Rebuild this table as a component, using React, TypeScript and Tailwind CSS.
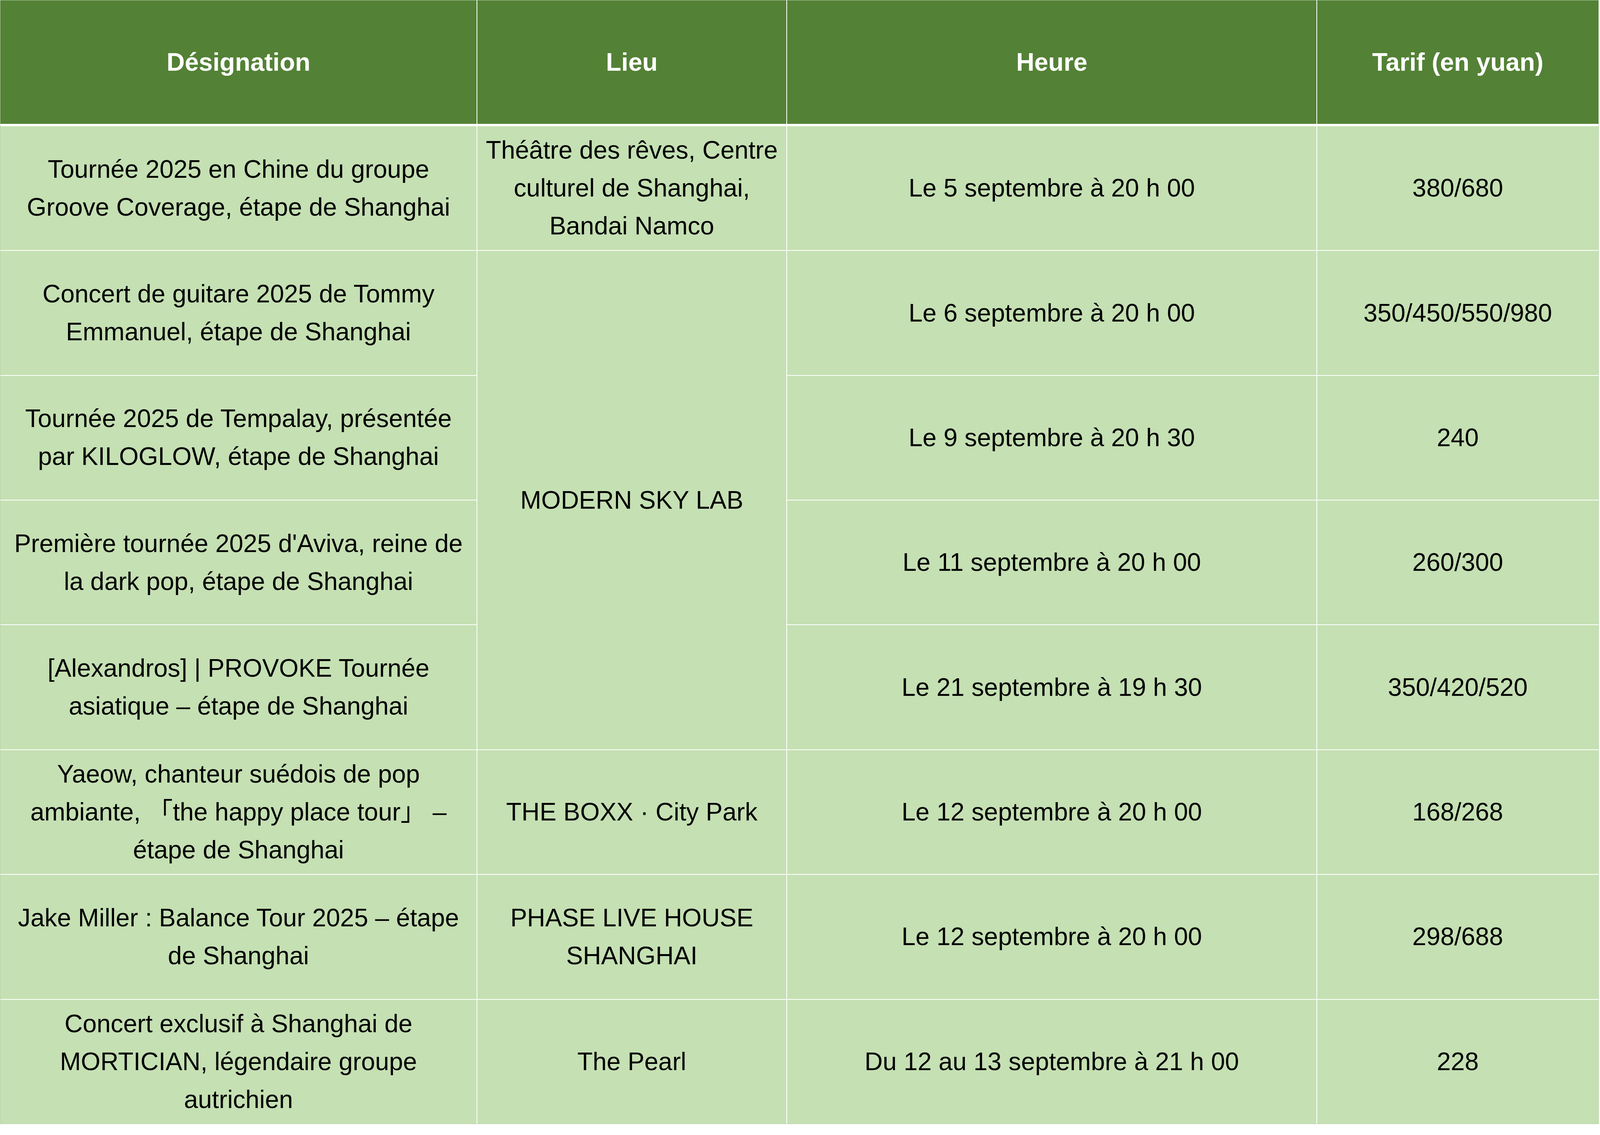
import React from "react";

type Row = {
  name: string[];
  lieu?: string[];
  heure: string;
  tarif: string;
};

const rows: Row[] = [
  {
    name: ["Tournée 2025 en Chine du groupe", "Groove Coverage, étape de Shanghai"],
    lieu: ["Théâtre des rêves, Centre", "culturel de Shanghai,", "Bandai Namco"],
    heure: "Le 5 septembre à 20 h 00",
    tarif: "380/680",
  },
  {
    name: ["Concert de guitare 2025 de Tommy", "Emmanuel, étape de Shanghai"],
    heure: "Le 6 septembre à 20 h 00",
    tarif: "350/450/550/980",
  },
  {
    name: ["Tournée 2025 de Tempalay, présentée", "par KILOGLOW, étape de Shanghai"],
    heure: "Le 9 septembre à 20 h 30",
    tarif: "240",
  },
  {
    name: ["Première tournée 2025 d'Aviva, reine de", "la dark pop, étape de Shanghai"],
    heure: "Le 11 septembre à 20 h 00",
    tarif: "260/300",
  },
  {
    name: ["[Alexandros] | PROVOKE Tournée", "asiatique – étape de Shanghai"],
    heure: "Le 21 septembre à 19 h 30",
    tarif: "350/420/520",
  },
  {
    name: ["Yaeow, chanteur suédois de pop", "ambiante, 「the happy place tour」 –", "étape de Shanghai"],
    lieu: ["THE BOXX · City Park"],
    heure: "Le 12 septembre à 20 h 00",
    tarif: "168/268",
  },
  {
    name: ["Jake Miller : Balance Tour 2025 – étape", "de Shanghai"],
    lieu: ["PHASE LIVE HOUSE", "SHANGHAI"],
    heure: "Le 12 septembre à 20 h 00",
    tarif: "298/688",
  },
  {
    name: ["Concert exclusif à Shanghai de", "MORTICIAN, légendaire groupe", "autrichien"],
    lieu: ["The Pearl"],
    heure: "Du 12 au 13 septembre à 21 h 00",
    tarif: "228",
  },
];

const cell =
  "bg-[#c5e0b3] flex items-center justify-center text-center whitespace-nowrap overflow-hidden";

const head = "bg-[#538135] flex items-center justify-center";

function Lines({ lines }: { lines: string[] }) {
  return (
    <div>
      {lines.map((l, i) => (
        <div key={i}>{l}</div>
      ))}
    </div>
  );
}

export default function App() {
  return (
    <div className="bg-white w-full min-h-screen font-['Liberation_Sans','Arial','Noto_Sans_CJK_SC',sans-serif] text-[1.5707vw] leading-[3.339vh] text-black">
      <div className="w-[99.92vw] border-[0.0422vw] border-[#b9cfab] bg-white flex flex-col gap-y-[0.2065vh]">
        <div className="grid grid-cols-[1411fr_916fr_1569fr_833fr] gap-x-[0.0422vw] h-[10.878vh] font-bold text-white">
          <div className={head}>Désignation</div>
          <div className={head}>Lieu</div>
          <div className={head}>Heure</div>
          <div className={head}>Tarif (en yuan)</div>
        </div>
        <div className="grid grid-cols-[1411fr_916fr_1569fr_833fr] grid-rows-[repeat(8,minmax(0,1fr))] gap-x-[0.0422vw] gap-y-[0.0689vh] h-[87.883vh]">
          {rows.map((r, i) => (
            <React.Fragment key={i}>
              <div className={cell} style={{ gridRow: i + 1, gridColumn: 1 }}>
                <Lines lines={r.name} />
              </div>
              {r.lieu && (
                <div className={cell} style={{ gridRow: i + 1, gridColumn: 2 }}>
                  <Lines lines={r.lieu} />
                </div>
              )}
              {i === 1 && (
                <div className={cell} style={{ gridRow: "2 / span 4", gridColumn: 2 }}>
                  MODERN SKY LAB
                </div>
              )}
              <div className={cell} style={{ gridRow: i + 1, gridColumn: 3 }}>
                {r.heure}
              </div>
              <div className={cell} style={{ gridRow: i + 1, gridColumn: 4 }}>
                {r.tarif}
              </div>
            </React.Fragment>
          ))}
        </div>
      </div>
    </div>
  );
}
